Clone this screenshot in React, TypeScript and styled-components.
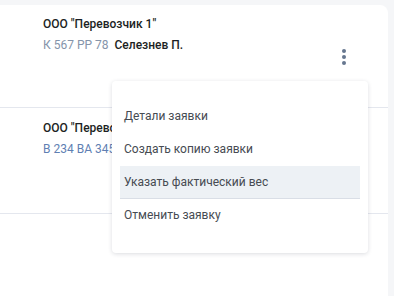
import React from 'react';
import styled, { createGlobalStyle } from 'styled-components';

const GlobalStyle = createGlobalStyle`
  html, body {
    margin: 0;
    padding: 0;
    background: #f5f6f8;
    font-family: Roboto, "Noto Sans", sans-serif;
  }
`;

type Order = {
  carrier: string;
  plate: string;
  driver?: string;
  plateColor: string;
};

const ORDERS: Order[] = [
  { carrier: 'ООО "Перевозчик 1"', plate: 'К 567 РР 78', driver: 'Селезнев П.', plateColor: '#8594aa' },
  { carrier: 'ООО "Перевозчик 2"', plate: 'В 234 ВА 345', driver: 'Иванов С.', plateColor: '#5f7fb3' },
];

const MENU = ['Детали заявки', 'Создать копию заявки', 'Указать фактический вес', 'Отменить заявку'];

function App() {
  return (
    <Page>
      <GlobalStyle />
      <Card>
        {ORDERS.map((order, i) => (
          <Row key={order.plate}>
            <Info>
              <Carrier>{order.carrier}</Carrier>
              <Meta>
                <Plate $color={order.plateColor}>{order.plate}</Plate>
                {order.driver && <Driver>{order.driver}</Driver>}
              </Meta>
            </Info>
            {i === 0 && (
              <>
                <Kebab>
                  <svg width="6" height="16" viewBox="0 0 6 16">
                    <circle cx="3" cy="2" r="2" fill="#66778f" />
                    <circle cx="3" cy="8" r="2" fill="#66778f" />
                    <circle cx="3" cy="14" r="2" fill="#66778f" />
                  </svg>
                </Kebab>
                <Menu>
                  {MENU.map((label) => (
                    <MenuItem key={label} $active={label === 'Указать фактический вес'}>
                      {label}
                    </MenuItem>
                  ))}
                </Menu>
              </>
            )}
          </Row>
        ))}
      </Card>
    </Page>
  );
}

const Page = styled.div`
  height: 296px;
  padding: 5px 6px 0 0;
  box-sizing: border-box;
  background: #f5f6f8;
  overflow: hidden;
`;

const Card = styled.div`
  background: #fff;
  height: 100%;
  border-top-right-radius: 8px;
`;

const Row = styled.div`
  position: relative;
  height: 103px;
  border-bottom: 1px solid #e4e7ee;
  padding: 12px 0 0 43px;
  box-sizing: border-box;
  & + & {
    height: 106px;
    padding-top: 13px;
  }
`;

const Info = styled.div`
  display: flex;
  flex-direction: column;
  gap: 7px;
`;

const Carrier = styled.div`
  font-size: 12px;
  font-weight: 500;
  color: #1c1f24;
  line-height: 14px;
`;

const Meta = styled.div`
  display: flex;
  gap: 6px;
  font-size: 12px;
  line-height: 14px;
`;

const Plate = styled.span<{ $color: string }>`
  color: ${(p) => p.$color};
`;

const Driver = styled.span`
  color: #1c1f24;
  font-weight: 500;
`;

const Kebab = styled.div`
  position: absolute;
  left: 341px;
  top: 44px;
  display: flex;
`;

const Menu = styled.div`
  position: absolute;
  left: 112px;
  top: 76px;
  width: 256px;
  padding: 19px 8px 21px;
  box-sizing: border-box;
  background: #fff;
  border-radius: 4px;
  box-shadow: 0 1px 4px rgba(30, 40, 60, 0.16);
  z-index: 2;
`;

const MenuItem = styled.div<{ $active?: boolean }>`
  height: 32px;
  display: flex;
  align-items: center;
  padding-left: 4px;
  font-size: 12px;
  color: #464b52;
  background: ${(p) => (p.$active ? '#edf1f5' : 'transparent')};
  border-bottom: 1px solid ${(p) => (p.$active ? '#d9dee6' : 'transparent')};
`;

export default App;
